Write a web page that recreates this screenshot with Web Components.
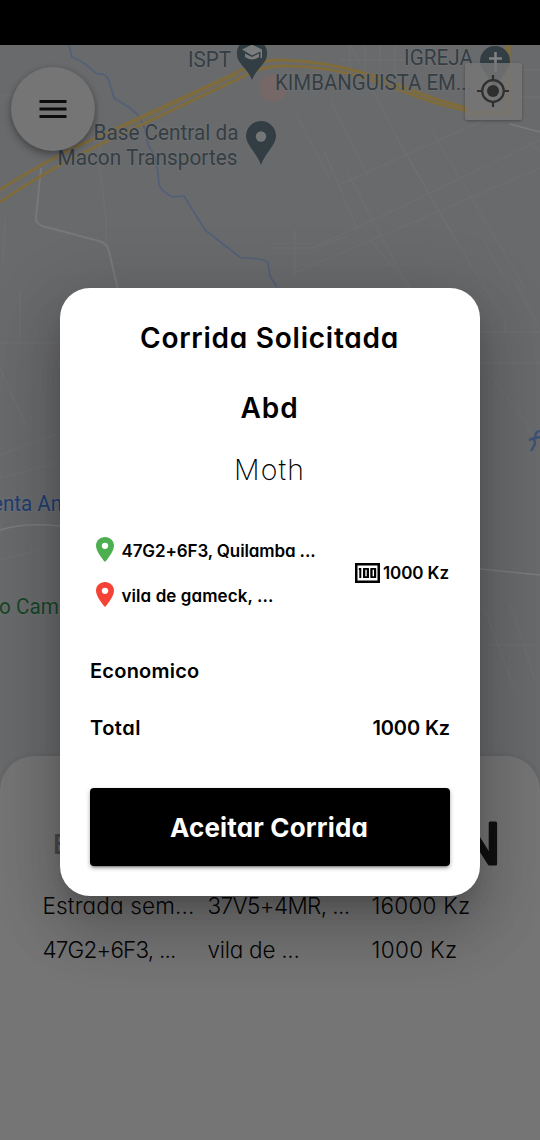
<!DOCTYPE html>
<html lang="pt">
<head>
<meta charset="utf-8">
<title>Corrida Solicitada</title>
<style>
html,body{margin:0;padding:0;background:#000}
body{font-family:Inter,"Liberation Sans",sans-serif;color:#000;font-feature-settings:"cv11" 1,"calt" 0}
</style>
</head>
<body>
<ride-app></ride-app>
<script>
const define = (name, html, init) => customElements.define(name, class extends HTMLElement {
  constructor() { super(); this.attachShadow({mode: 'open'}).innerHTML = html; }
  connectedCallback() { if (init) init.call(this, this.shadowRoot); }
});

// A single line of text whose tracking is adjusted to fill a given width.
define('fit-text', `<style>:host{display:inline-block;white-space:pre;line-height:inherit}span{display:inline-block}</style><span><slot></slot></span>`, function (root) {
  const span = root.querySelector('span'), target = +this.getAttribute('w');
  const spacing = (target - span.getBoundingClientRect().width) / this.textContent.length;
  span.style.letterSpacing = spacing + 'px';
  this.style.width = target + 'px';
});

define('city-map', `<style>:host{display:block;width:540px;height:760px;overflow:hidden}svg{display:block}
text{font-family:Roboto,sans-serif;font-size:22.5px;fill:#353e44;stroke:#6f7173;stroke-width:1.5px;paint-order:stroke}</style>
<svg width="540" height="760" viewBox="0 45 540 760">
<rect y="45" width="540" height="760" fill="#696a6c"/>
<g fill="none" stroke="#6f7072" stroke-width="1">
<path d="M0 95H30M100 102V168L106 220V244M5 218L3 265M20 290V343M0 343H58M0 368L28 430M0 455L55 435M0 478L60 462M0 560L42 549M295 112L330 180M330 100L369 178M350 45L405 153L480 280M339 185L500 113M290 275L540 168M312 248L405 205L540 140M350 45V72M365 45V82M380 45V70M395 45V92M340 60H430M430 45V65M510 70H540M510 97H540M523 137L540 151M347 172L410 290M405 150L455 240M430 128L525 288M483 240L510 288M324 151L358 231M370 240L411 288M295 230V275M270 248H315L350 235M480 332H540M480 363H540M486 370L520 414L532 436M483 285L505 320V332M515 280L540 330M485 610L515 690M510 603L535 680M500 690V735M490 645H535"/>
<path d="M41 168L36 217Q35 225 46 227L99 241Q107 243 109 251L118 290" stroke="#77787a" stroke-width="2"/>
<path d="M0 530Q25 522 60 526M480 569L540 575" stroke="#7a7b7d" stroke-width="1.5"/>
<path d="M510 124L540 132" stroke="#7b7b7b" stroke-width="1.5"/>
</g>
<g fill="none" stroke="#535f79" stroke-width="1.7" stroke-linejoin="round">
<path d="M69 45L72 57Q82 60 97 74Q107 73 109 81L114 98L130 108Q145 118 148 145Q158 158 159 185Q162 192 173 197L184 196L205 230L241 258Q265 258 268 263L270 276L277 287"/>
<path d="M529 440L534 438L535 444L531 451M540 431Q534 432 536 438L540 437" stroke="#3f5276" stroke-width="2.5"/>
</g>
<circle cx="273" cy="88" r="14" fill="#776868"/>
<g fill="none" stroke="#806c3a">
<path d="M0 190Q45 160 100 136L240 71Q258 60 280 60Q325 61 371 75L435 99L470 109" stroke-width="3"/>
<path d="M0 202Q45 171 105 142L240 78Q258 67 280 66Q325 65 371 80L435 103L470 112" stroke-width="2.8"/>
<path d="M115 132L238 74.500" stroke-width="1.3"/>
<path d="M508 45V113H465" stroke-width="5"/>
</g>
<g fill="#323d44">
<path d="M237 55a15 15 0 0 1 4-12h22a15 15 0 0 1 4 12c0 8-11 14-15 25c-4-11-15-17-15-25z"/>
<path d="M261 121a15 15 0 0 1 15 15c0 9-11 17-15 29c-4-12-15-20-15-29a15 15 0 0 1 15-15z"/>
<path d="M495 46a15 15 0 0 1 15 15c0 9-11 17-15 29c-4-12-15-20-15-29a15 15 0 0 1 15-15z"/>
</g>
<circle cx="261" cy="136.500" r="5.2" fill="#747678"/>
<g fill="#7a7c7e"><path d="M242 49.500L252 44.500L262 49.500V58H260.500V51.500L252 55.500Z"/><path d="M245 53.500L252 57L259 53.500V57Q252 62 245 57Z"/></g>
<path d="M495.500 52V72M489 58.500H502" stroke="#7e8082" stroke-width="2.600"/>
<text x="188" y="67" textLength="43" lengthAdjust="spacingAndGlyphs">ISPT</text>
<text x="93.500" y="139.500" textLength="145" lengthAdjust="spacingAndGlyphs">Base Central da</text>
<text x="57.500" y="164.500" textLength="180" lengthAdjust="spacingAndGlyphs">Macon Transportes</text>
<text x="404" y="65" textLength="69" lengthAdjust="spacingAndGlyphs">IGREJA</text>
<text x="275" y="90" textLength="197" lengthAdjust="spacingAndGlyphs">KIMBANGUISTA EM...</text>
<text x="-8" y="511" textLength="70" lengthAdjust="spacingAndGlyphs" style="fill:#203d70">enta An</text>
<text x="-1" y="613.500" textLength="60" lengthAdjust="spacingAndGlyphs" style="fill:#174527">o Cam</text>
</svg>`);

define('menu-button', `<style>:host{display:grid;place-items:center;width:84px;height:84px;border-radius:50%;background:#757575;box-shadow:0 4px 8px rgba(0,0,0,.3),0 1px 5px rgba(0,0,0,.12)}</style>
<svg width="28" height="18" fill="#0c0c0c"><path d="M0.500 0H27.500V3H0.500zM0.500 7.500H27.500V10.500H0.500zM0.500 15H27.500V18H0.500z"/></svg>`);

define('locate-button', `<style>:host{display:grid;place-items:center;width:57px;height:57px;border-radius:2px;background:rgba(118,118,118,.83);box-shadow:0 1px 3px rgba(0,0,0,.3)}svg{margin-top:-1px}</style>
<svg width="34" height="34" viewBox="0 0 34 34"><circle cx="17" cy="17" r="10.800" fill="none" stroke="#303030" stroke-width="2.200"/><circle cx="17" cy="17" r="6" fill="#2e2e2e"/><path d="M17 1V6M17 28V33M1 17H6M28 17H33" stroke="#303030" stroke-width="2.200"/></svg>`);

define('trips-sheet', `<style>:host{display:block;height:384px;box-sizing:border-box;border-radius:34px 34px 0 0;background:#757575;padding:50px 43px 0;box-shadow:0 0 5px rgba(0,0,0,.12)}
header{display:flex;justify-content:space-between;align-items:center;height:76px;margin:0 0 2px 10px}
.label{font-size:27px;font-weight:600;color:#484848}
.status{display:block;width:60px;height:76px;overflow:visible}
.status text{font-size:56px;font-weight:400;fill:#101010;stroke:#101010;stroke-width:3.2px;stroke-linejoin:round}
.list{display:grid;grid-template-columns:165px 164px 1fr;grid-auto-rows:44px;font-size:22.500px;font-weight:300;line-height:44px;color:#050505;margin-left:-.5px}</style>
<header><span class="label">E</span><svg class="status"><text x="63.500" y="58.300" text-anchor="end">N</text></svg></header>
<div class="list"><fit-text w="152">Estrada sem...</fit-text><fit-text w="142">37V5+4MR, ...</fit-text><fit-text w="99">16000 Kz</fit-text>
<fit-text w="133">47G2+6F3, ...</fit-text><fit-text w="92">vila de ...</fit-text><fit-text w="86">1000 Kz</fit-text></div>`);

define('place-pin', `<style>:host{display:block;width:18px;height:25px}svg{display:block}</style><svg width="18" height="25" viewBox="5 2 14 20" preserveAspectRatio="none" fill="currentColor"><path d="M12 2C8.130 2 5 5.130 5 9c0 5.250 7 13 7 13s7-7.750 7-13c0-3.870-3.130-7-7-7zm0 9.500a2.500 2.500 0 0 1 0-5 2.500 2.500 0 0 1 0 5z"/></svg>`);

define('route-stop', `<style>:host{display:flex;align-items:center;height:45px;gap:8px}place-pin{color:var(--pin);margin-top:-3px}</style><place-pin></place-pin><slot></slot>`);

define('cash-icon', `<style>:host{display:block;width:25px;height:20px;margin-top:-1px}svg{display:block}</style><svg width="25" height="20"><path d="M1.250 1.250H23.750V18.750H1.250Z" fill="none" stroke="#000" stroke-width="2.500"/><path d="M3.800 5H6.300V15H4.300V7H3.800Z"/><path fill-rule="evenodd" d="M8.500 5H13.500Q14 5 14 5.500V14.500Q14 15 13.500 15H8.500Q8 15 8 14.500V5.500Q8 5 8.500 5ZM10.300 6.800V13.200H11.700V6.800ZM15.800 5H20.700Q21.200 5 21.200 5.500V14.500Q21.200 15 20.700 15H15.800Q15.300 15 15.300 14.500V5.500Q15.300 5 15.800 5ZM17.600 6.800V13.200H19V6.800Z"/></svg>`);

define('accept-button', `<style>:host{display:block}button{display:block;width:100%;height:78px;padding:1px 2px 0 0;border:0;border-radius:4px;background:#000;color:#fff;font:700 26px/77px Inter,sans-serif;font-feature-settings:inherit;box-shadow:0 3px 2px -2px rgba(0,0,0,.3),0 2px 4px rgba(0,0,0,.35)}</style><button><slot></slot></button>`);

define('ride-dialog', `<style>:host{display:block;box-sizing:border-box;width:420px;height:608px;border-radius:30px;padding:30px;background:#fff;box-shadow:0 16px 23px -10px rgba(0,0,0,.2),0 36px 57px 5px rgba(0,0,0,.14),0 13px 69px 12px rgba(0,0,0,.12)}
h1,h2,p{margin:0;font-size:28px;line-height:40px;text-align:center;font-weight:600;height:40px}
h1,h2,p{padding-right:1px}
h2{margin-top:30px}p{margin-top:22px;font-weight:250;font-size:28.500px}
.route{display:flex;justify-content:space-between;align-items:center;margin:38px 0 37px 5.500px;font-size:17px;font-weight:600;line-height:46px}
.fare{display:flex;align-items:center;gap:3.500px;margin-right:1px}
.row{display:flex;justify-content:space-between;height:30px;line-height:32px;font-size:20px;font-weight:600}
.total{margin:27px 0 46px}</style>
<h1><fit-text w="259">Corrida Solicitada</fit-text></h1>
<h2><fit-text w="58">Abd</fit-text></h2>
<p><fit-text w="71">Moth</fit-text></p>
<div class="route"><div>
<route-stop style="--pin:#4caf50"><fit-text w="194">47G2+6F3, Quilamba ...</fit-text></route-stop>
<route-stop style="--pin:#f44336"><fit-text w="152">vila de gameck, ...</fit-text></route-stop></div>
<div class="fare"><cash-icon></cash-icon><fit-text w="66">1000 Kz</fit-text></div></div>
<div class="row"><fit-text w="109.500">Economico</fit-text></div>
<div class="row total"><fit-text w="51">Total</fit-text><fit-text w="77.500">1000 Kz</fit-text></div>
<accept-button><fit-text w="198">Aceitar Corrida</fit-text></accept-button>`);

define('ride-app', `<style>:host{display:block;position:relative;width:540px;height:1140px;overflow:hidden;background:#000;padding-top:45px;box-sizing:border-box}
trips-sheet{margin-top:-49px;position:relative}
menu-button,locate-button,ride-dialog{position:absolute}
menu-button{left:10.500px;top:66.500px}locate-button{left:464.500px;top:63px}ride-dialog{left:60px;top:288px}</style>
<city-map></city-map><trips-sheet></trips-sheet><menu-button></menu-button><locate-button></locate-button><ride-dialog></ride-dialog>`);
</script>
</body>
</html>
